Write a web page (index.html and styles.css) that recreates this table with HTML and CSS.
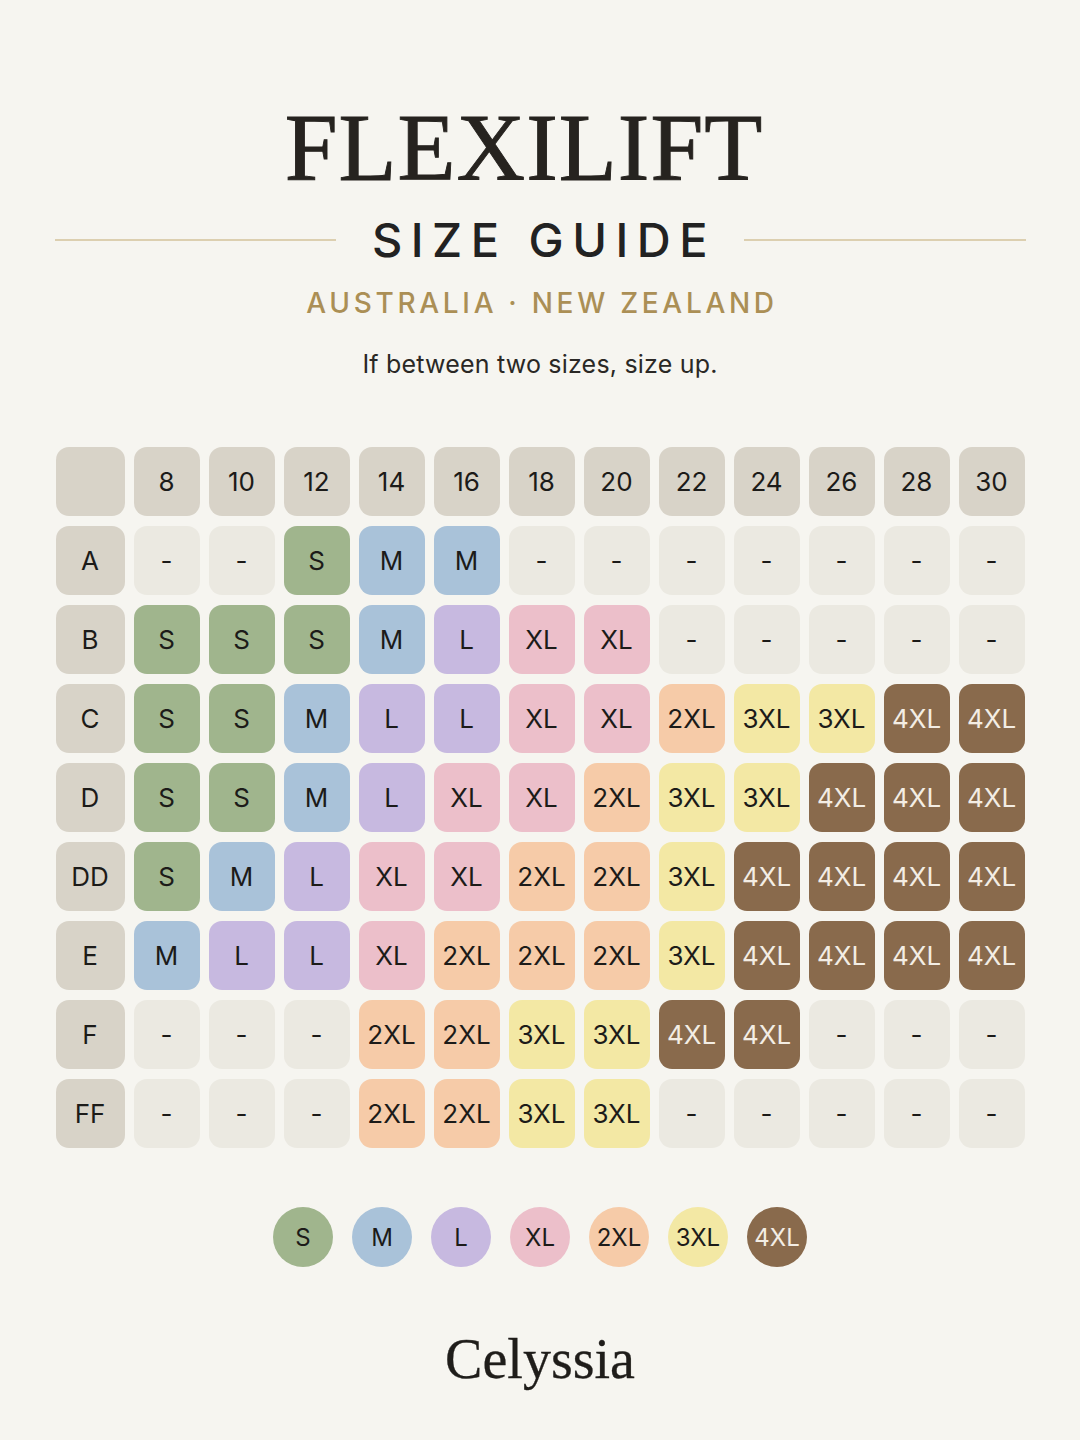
FILE: index.html
```html
<!DOCTYPE html>
<html lang="en">
<head>
<meta charset="utf-8">
<title>Flexilift Size Guide</title>
<link rel="stylesheet" href="styles.css">
</head>
<body>
<main class="page">
  <h1 class="title">FLEXILIFT</h1>
  <div class="subtitle-row">
    <span class="rule"></span>
    <h2 class="subtitle">SIZE GUIDE</h2>
    <span class="rule"></span>
  </div>
  <p class="region">AUSTRALIA · NEW ZEALAND</p>
  <p class="note">If between two sizes, size up.</p>

  <div class="grid">
    <div class="cell head"></div>
    <div class="cell head">8</div><div class="cell head">10</div><div class="cell head">12</div><div class="cell head">14</div><div class="cell head">16</div><div class="cell head">18</div><div class="cell head">20</div><div class="cell head">22</div><div class="cell head">24</div><div class="cell head">26</div><div class="cell head">28</div><div class="cell head">30</div>

    <div class="cell head">A</div>
    <div class="cell none">-</div><div class="cell none">-</div><div class="cell s">S</div><div class="cell m">M</div><div class="cell m">M</div><div class="cell none">-</div><div class="cell none">-</div><div class="cell none">-</div><div class="cell none">-</div><div class="cell none">-</div><div class="cell none">-</div><div class="cell none">-</div>

    <div class="cell head">B</div>
    <div class="cell s">S</div><div class="cell s">S</div><div class="cell s">S</div><div class="cell m">M</div><div class="cell l">L</div><div class="cell xl">XL</div><div class="cell xl">XL</div><div class="cell none">-</div><div class="cell none">-</div><div class="cell none">-</div><div class="cell none">-</div><div class="cell none">-</div>

    <div class="cell head">C</div>
    <div class="cell s">S</div><div class="cell s">S</div><div class="cell m">M</div><div class="cell l">L</div><div class="cell l">L</div><div class="cell xl">XL</div><div class="cell xl">XL</div><div class="cell x2">2XL</div><div class="cell x3">3XL</div><div class="cell x3">3XL</div><div class="cell x4">4XL</div><div class="cell x4">4XL</div>

    <div class="cell head">D</div>
    <div class="cell s">S</div><div class="cell s">S</div><div class="cell m">M</div><div class="cell l">L</div><div class="cell xl">XL</div><div class="cell xl">XL</div><div class="cell x2">2XL</div><div class="cell x3">3XL</div><div class="cell x3">3XL</div><div class="cell x4">4XL</div><div class="cell x4">4XL</div><div class="cell x4">4XL</div>

    <div class="cell head">DD</div>
    <div class="cell s">S</div><div class="cell m">M</div><div class="cell l">L</div><div class="cell xl">XL</div><div class="cell xl">XL</div><div class="cell x2">2XL</div><div class="cell x2">2XL</div><div class="cell x3">3XL</div><div class="cell x4">4XL</div><div class="cell x4">4XL</div><div class="cell x4">4XL</div><div class="cell x4">4XL</div>

    <div class="cell head">E</div>
    <div class="cell m">M</div><div class="cell l">L</div><div class="cell l">L</div><div class="cell xl">XL</div><div class="cell x2">2XL</div><div class="cell x2">2XL</div><div class="cell x2">2XL</div><div class="cell x3">3XL</div><div class="cell x4">4XL</div><div class="cell x4">4XL</div><div class="cell x4">4XL</div><div class="cell x4">4XL</div>

    <div class="cell head">F</div>
    <div class="cell none">-</div><div class="cell none">-</div><div class="cell none">-</div><div class="cell x2">2XL</div><div class="cell x2">2XL</div><div class="cell x3">3XL</div><div class="cell x3">3XL</div><div class="cell x4">4XL</div><div class="cell x4">4XL</div><div class="cell none">-</div><div class="cell none">-</div><div class="cell none">-</div>

    <div class="cell head">FF</div>
    <div class="cell none">-</div><div class="cell none">-</div><div class="cell none">-</div><div class="cell x2">2XL</div><div class="cell x2">2XL</div><div class="cell x3">3XL</div><div class="cell x3">3XL</div><div class="cell none">-</div><div class="cell none">-</div><div class="cell none">-</div><div class="cell none">-</div><div class="cell none">-</div>
  </div>

  <div class="legend">
    <span class="dot s">S</span>
    <span class="dot m">M</span>
    <span class="dot l">L</span>
    <span class="dot xl">XL</span>
    <span class="dot x2">2XL</span>
    <span class="dot x3">3XL</span>
    <span class="dot x4">4XL</span>
  </div>

  <p class="brand">Celyssia</p>
</main>
</body>
</html>
```

FILE: styles.css
```css
html, body {
  margin: 0;
  padding: 0;
  background: #f6f5f0;
}

.page {
  width: 1080px;
  height: 1440px;
  display: flex;
  flex-direction: column;
  align-items: center;
  font-family: "Inter", "Open Sans", sans-serif;
  color: #1d1b18;
}

.title {
  margin: 101px 32px 0 0;
  font-family: "Liberation Serif", "Times New Roman", serif;
  font-weight: 400;
  font-size: 95px;
  line-height: 1;
  color: #26231f;
  letter-spacing: 1px;
  -webkit-text-stroke: 0.9px #26231f;
}

.subtitle-row {
  margin-top: 20px;
  width: 971px;
  display: flex;
  align-items: center;
  gap: 28px;
}

.rule {
  flex: 1;
  height: 2px;
  background: #dccfb0;
}

.subtitle {
  margin: 0;
  font-size: 47px;
  font-weight: 500;
  line-height: 48px;
  letter-spacing: 8.5px;
  color: #222;
  padding-left: 8px;
}

.region {
  margin: 24px 0 0;
  font-size: 28px;
  line-height: 30px;
  font-weight: 500;
  letter-spacing: 3.7px;
  padding-left: 4px;
  color: #ab8f55;
}

.note {
  margin: 34px 0 0;
  font-size: 25px;
  line-height: 24px;
  letter-spacing: 0.2px;
  color: #2a2825;
}

.grid {
  margin-top: 71px;
  display: grid;
  grid-template-columns: 69px repeat(12, 66px);
  grid-auto-rows: 69px;
  column-gap: 9px;
  row-gap: 10px;
}

.cell {
  border-radius: 13px;
  display: flex;
  align-items: center;
  justify-content: center;
  font-size: 26px;
  font-weight: 400;
  color: #1c1b19;
}

.head { background: #d8d3c8; }
.none { background: #ebe9e1; }
.s  { background: #a0b58d; }
.m  { background: #a9c2d9; }
.l  { background: #c7b9e0; }
.xl { background: #ecbfca; }
.x2 { background: #f6cba8; }
.x3 { background: #f3e8a4; }
.x4 { background: #896a4c; color: #f3ede4; }

.legend {
  margin-top: 59px;
  display: flex;
  gap: 19px;
}

.dot {
  width: 60px;
  height: 60px;
  border-radius: 50%;
  display: flex;
  align-items: center;
  justify-content: center;
  font-size: 24px;
  color: #1c1b19;
}

.dot.x4 { color: #f3ede4; }

.brand {
  margin: 64px 0 0;
  font-family: "Liberation Serif", "Times New Roman", serif;
  font-size: 56px;
  line-height: 1;
  color: #1f1d1a;
  -webkit-text-stroke: 0.3px #1f1d1a;
}
```
